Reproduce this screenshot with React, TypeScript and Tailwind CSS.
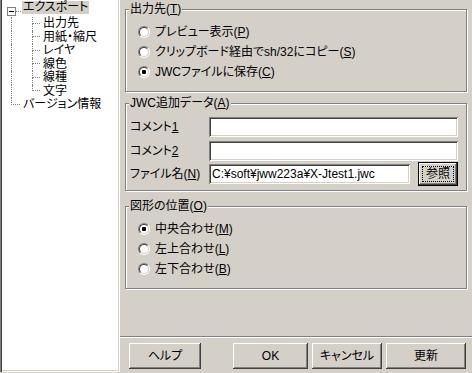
import type { ReactNode } from "react";

const dots = "border-dotted border-[#808080]";

function Tree() {
  const kids = ["出力先", "用紙・縮尺", "レイヤ", "線色", "線種", "文字"];
  return (
    <div className="h-[372px] w-[120px] shrink-0 bg-white shadow-[inset_1px_0_0_#808080,inset_2px_0_0_#404040,inset_-1px_-1px_0_#fff,inset_-2px_-2px_0_#d4d0c8]">
      <div className="flex h-[17px] items-start">
        <div className="ml-[7px] mt-[7px] flex h-[9px] w-[9px] items-center justify-center border border-[#808080] bg-white">
          <div className="h-px w-[5px] bg-black" />
        </div>
        <div className={`mt-[11px] w-[5px] border-t ${dots}`} />
        <span className="ml-px mt-px h-[13px] bg-[#d4d0c8] px-[1px] leading-[13px]">エクスポート</span>
      </div>
      {kids.map((k, i) => (
        <div key={k} className="flex h-[13.5px]">
          <div className={`ml-[11px] w-[21px] border-l ${dots}`} />
          <div className="flex w-[8px] flex-col">
            <div className={`h-1/2 border-b border-l ${dots}`} />
            <div className={`h-1/2 ${i < kids.length - 1 ? `border-l ${dots}` : ""}`} />
          </div>
          <span className="ml-[3px] self-center leading-[13px]">{k}</span>
        </div>
      ))}
      <div className="flex h-[13.5px]">
        <div className="ml-[11px] flex w-[9px] flex-col">
          <div className={`h-1/2 border-b border-l ${dots}`} />
        </div>
        <span className="ml-[3px] self-center leading-[13px]">バージョン情報</span>
      </div>
    </div>
  );
}

function Group({ title, className, children }: { title: ReactNode; className: string; children: ReactNode }) {
  return (
    <div className={`relative border border-[#808080] shadow-[inset_1px_1px_0_#fff,1px_1px_0_#fff] ${className}`}>
      <span className="absolute left-[3px] top-[-7px] bg-[#d4d0c8] px-[1px] leading-[13px]">{title}</span>
      {children}
    </div>
  );
}

function Radio({ checked, children }: { checked?: boolean; children: ReactNode }) {
  return (
    <div className="flex h-[20px] items-center">
      <span className="flex h-[12px] w-[12px] items-center justify-center rounded-full border border-t-[#808080] border-l-[#808080] border-r-white border-b-white">
        <span className="flex h-[10px] w-[10px] items-center justify-center rounded-full border border-t-[#404040] border-l-[#404040] border-r-[#d4d0c8] border-b-[#d4d0c8] bg-white">
          {checked && <span className="h-[4px] w-[4px] rounded-[1px] bg-black" />}
        </span>
      </span>
      <span className="ml-[5px] leading-[13px]">{children}</span>
    </div>
  );
}

const sunken =
  "bg-white shadow-[inset_1px_1px_0_#808080,inset_-1px_-1px_0_#fff,inset_2px_2px_0_#404040,inset_-2px_-2px_0_#d4d0c8]";
const raised =
  "bg-[#d4d0c8] shadow-[inset_-1px_-1px_0_#404040,inset_1px_1px_0_#fff,inset_-2px_-2px_0_#808080]";

function Btn({ className, children }: { className: string; children: ReactNode }) {
  return <div className={`flex h-full items-center justify-center ${raised} ${className}`}>{children}</div>;
}

export default function App() {
  return (
    <div className="flex h-[373px] w-[472px] overflow-hidden bg-[#d4d0c8] text-[12px] leading-[14px] text-black [font-family:'Liberation_Sans','Noto_Sans_CJK_JP',sans-serif] [font-feature-settings:'palt']">
      <Tree />
      <div className="flex w-[352px] flex-col">
        <div className="flex flex-col px-[5px] pt-[9px]">
          <Group title={<>出力先(<u>T</u>)</>} className="h-[83px] pl-[12px] pt-[12px]">
            <Radio>プレビュー表示(<u>P</u>)</Radio>
            <Radio>クリップボード経由でsh/32にコピー(<u>S</u>)</Radio>
            <Radio checked>JWCファイルに保存(<u>C</u>)</Radio>
          </Group>
          <Group title={<>JWC追加データ(<u>A</u>)</>} className="mt-[11px] flex h-[88px] flex-col gap-[3.5px] pl-[4px] pr-[8px] pt-[13px]">
            <div className="flex h-[20px] items-center">
              <span className="w-[79px]">コメント<u>1</u></span>
              <div className={`h-full flex-1 ${sunken}`} />
            </div>
            <div className="flex h-[20px] items-center">
              <span className="w-[79px]">コメント<u>2</u></span>
              <div className={`h-full flex-1 ${sunken}`} />
            </div>
            <div className="flex h-[20px] items-center">
              <span className="w-[79px]">ファイル名(<u>N</u>)</span>
              <div className={`flex h-full flex-1 items-center pl-[3px] ${sunken}`}>C:¥soft¥jww223a¥X-Jtest1.jwc</div>
              <div className="ml-[8px] h-[24px] w-[40px] shrink-0 border border-black">
                <div className={`h-full p-[3px] ${raised}`}>
                  <div className="flex h-full items-center justify-center border border-dotted border-black">参照</div>
                </div>
              </div>
            </div>
          </Group>
          <Group title={<>図形の位置(<u>O</u>)</>} className="mt-[15px] h-[83px] pl-[12px] pt-[12px]">
            <Radio checked>中央合わせ(<u>M</u>)</Radio>
            <Radio>左上合わせ(<u>L</u>)</Radio>
            <Radio>左下合わせ(<u>B</u>)</Radio>
          </Group>
        </div>
        <div className="mt-auto h-[2px] border-b border-t border-b-white border-t-[#808080]" />
        <div className="mb-[4px] mt-[5px] flex h-[26px]">
          <Btn className="ml-[9px] w-[72px]">ヘルプ</Btn>
          <Btn className="ml-[32px] w-[75px]">OK</Btn>
          <Btn className="ml-[4px] w-[70px]">キャンセル</Btn>
          <Btn className="ml-[4px] w-[80px]">更新</Btn>
        </div>
      </div>
    </div>
  );
}
